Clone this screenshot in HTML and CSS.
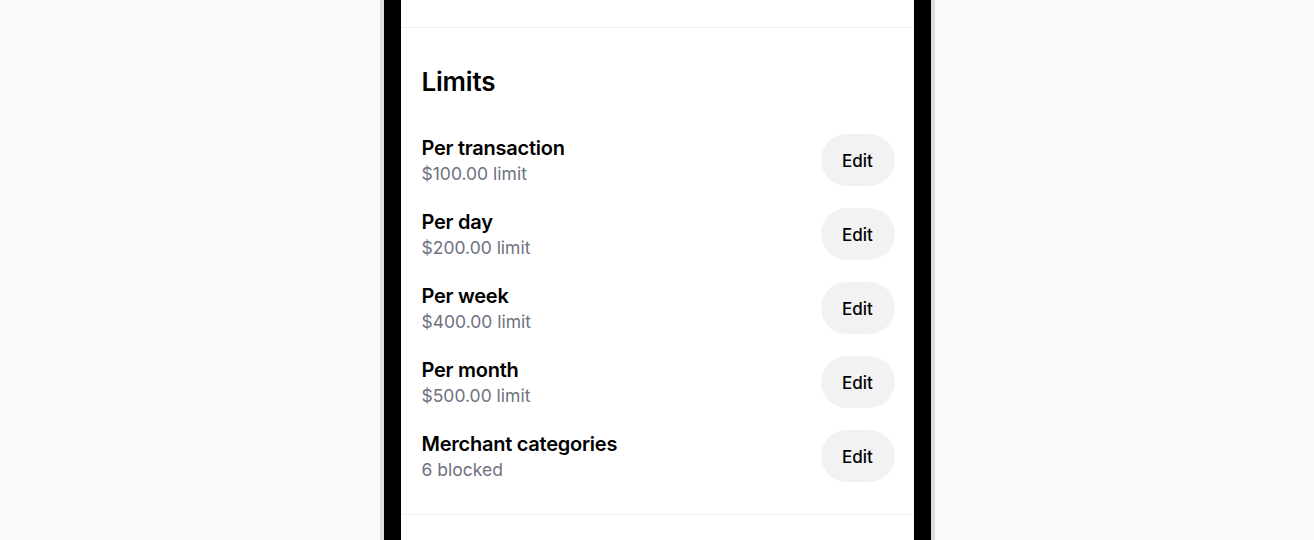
FILE: index.html
```html
<!DOCTYPE html>
<html lang="en">
<head>
    <meta charset="UTF-8">
    <meta name="viewport" content="width=device-width, initial-scale=1.0">
    <title>Card limits</title>
    <link rel="stylesheet" href="styles.css">
</head>
<body>
<div class="phone">
    <div class="screen">
        <div class="top-area"></div>

        <section class="limits">
            <h2 class="limits-title">Limits</h2>

            <div class="limit-list">
                <div class="limit-row">
                    <div class="limit-text">
                        <div class="limit-name">Per transaction</div>
                        <div class="limit-value">$100.00 limit</div>
                    </div>
                    <button class="edit-button">Edit</button>
                </div>
                <div class="limit-row">
                    <div class="limit-text">
                        <div class="limit-name">Per day</div>
                        <div class="limit-value">$200.00 limit</div>
                    </div>
                    <button class="edit-button">Edit</button>
                </div>
                <div class="limit-row">
                    <div class="limit-text">
                        <div class="limit-name">Per week</div>
                        <div class="limit-value">$400.00 limit</div>
                    </div>
                    <button class="edit-button">Edit</button>
                </div>
                <div class="limit-row">
                    <div class="limit-text">
                        <div class="limit-name">Per month</div>
                        <div class="limit-value">$500.00 limit</div>
                    </div>
                    <button class="edit-button">Edit</button>
                </div>
                <div class="limit-row">
                    <div class="limit-text">
                        <div class="limit-name">Merchant categories</div>
                        <div class="limit-value">6 blocked</div>
                    </div>
                    <button class="edit-button">Edit</button>
                </div>
            </div>
        </section>

        <div class="bottom-area"></div>
    </div>
</div>
</body>
</html>
```

FILE: styles.css
```css
body {
    font-family: Inter, 'Noto Sans', sans-serif;
    background-color: #f8f9fb;
    margin: 0;
    padding: 0;
    height: 540px;
    overflow: hidden;
}
.phone {
    width: 555px;
    height: 540px;
    margin: 0 auto;
    box-sizing: border-box;
    background: #000;
    border-left: 4px solid #dedede;
    border-right: 4px solid #dedede;
    padding: 0 17px;
}
.screen {
    background: #fff;
    height: 100%;
    display: flex;
    flex-direction: column;
}
.top-area {
    height: 27px;
    border-bottom: 1px solid #efefef;
}
.limits {
    padding: 38px 19px 32px 21px;
    border-bottom: 1px solid #efefef;
}
.limits-title {
    font-size: 26px;
    line-height: 32px;
    font-weight: 600;
    letter-spacing: -0.2px;
    color: #000;
    margin: 0 0 36px;
}
.limit-list {
    display: flex;
    flex-direction: column;
    gap: 22px;
}
.limit-row {
    display: flex;
    align-items: center;
    justify-content: space-between;
    height: 52px;
}
.limit-text {
    padding-top: 1px;
}
.limit-name {
    font-size: 20px;
    line-height: 24px;
    font-weight: 600;
    letter-spacing: -0.25px;
    color: #000;
}
.limit-value {
    font-size: 17.5px;
    line-height: 22px;
    margin-top: 3px;
    color: #6e7180;
}
.edit-button {
    font-family: inherit;
    width: 74px;
    height: 52px;
    border: none;
    border-radius: 26px;
    background-color: #f2f2f3;
    color: #000;
    font-size: 17px;
    font-weight: 500;
    cursor: pointer;
    padding: 2px 0 0;
}
.edit-button:hover {
    background-color: #e8e8ea;
}
```
